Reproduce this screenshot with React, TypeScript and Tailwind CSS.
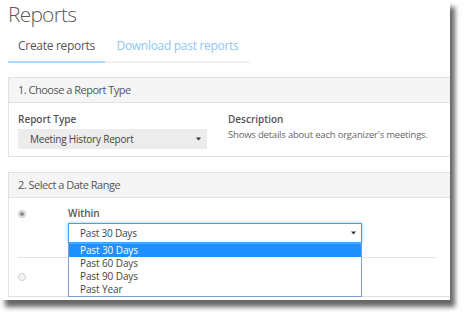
import React from "react";

const Caret = () => (
  <svg width="5" height="4" viewBox="0 0 5 4" className="shrink-0">
    <path d="M0 0.5 L5 0.5 L2.5 3.5 Z" fill="#333" />
  </svg>
);

const Radio = ({ checked }: { checked?: boolean }) => (
  <div
    className={
      checked
        ? "w-[8px] h-[8px] rounded-full border border-[#c4c4c4] bg-[#ececec] flex items-center justify-center"
        : "w-[8px] h-[8px] rounded-full border border-[#cfcfcf] bg-[#f3f3f3]"
    }
  >
    {checked && <div className="w-[4px] h-[4px] rounded-full bg-[#8a8a8a]" />}
  </div>
);

const SectionHeader = ({ children }: { children: React.ReactNode }) => (
  <div className="h-[25px] bg-[#f5f5f5] border-b border-[#e1e1e1] pl-[9px] flex items-center text-[11px] tracking-[-0.5px] text-[#555]">
    {children}
  </div>
);

const ranges = ["Past 30 Days", "Past 60 Days", "Past 90 Days", "Past Year"];

export default function App() {
  return (
    <div className="w-[465px] h-[319px] bg-white font-['Open_Sans',sans-serif] text-[#555]">
      <div className="w-[450px] h-[300px] bg-white overflow-hidden pl-[8px] shadow-[5px_7px_5px_rgba(0,0,0,0.6)]">
        <h1 className="pt-[1px] text-[21px] leading-[26px] font-light tracking-[-0.8px] text-[#5a5a5a]">
          Reports
        </h1>

        {/* tabs */}
        <div className="mt-[4px] flex w-[242px] text-[12px] tracking-[-0.3px]">
          <div className="w-[97px] h-[32px] border-b-2 border-[#addaf8] flex items-center justify-center text-[#555]">
            Create reports
          </div>
          <div className="flex-1 h-[32px] border-b-2 border-[#f1f1f1] flex items-center justify-center text-[#8ec6ef]">
            Download past reports
          </div>
        </div>

        {/* section 1 */}
        <div className="mt-[14px] border-t border-l border-b border-[#e1e1e1]">
          <SectionHeader>1. Choose a Report Type</SectionHeader>
          <div className="pl-[9px] pt-[10px] pb-[7px] flex gap-[21px]">
            <div className="w-[189px]">
              <div className="text-[10px] leading-[12px] font-semibold text-[#555]">Report Type</div>
              <div className="mt-[4px] h-[20px] bg-[#ececec] pl-[12px] pr-[6px] flex items-center justify-between text-[10px] tracking-[-0.2px] text-[#444]">
                <span>Meeting History Report</span>
                <Caret />
              </div>
            </div>
            <div>
              <div className="text-[10px] leading-[12px] font-semibold text-[#555]">Description</div>
              <div className="mt-[3px] text-[9.5px] leading-[14px] tracking-[-0.2px] text-[#666]">
                Shows details about each organizer's meetings.
              </div>
            </div>
          </div>
        </div>

        {/* section 2 */}
        <div className="mt-[15px] border-t border-l border-b border-[#e1e1e1]">
          <SectionHeader>2. Select a Date Range</SectionHeader>
          <div className="pl-[9px]">
            <div className="flex pt-[9px] pb-[14px] border-b border-[#e4e4e4] w-[419px]">
              <div className="w-[50px] pt-[3px]">
                <Radio checked />
              </div>
              <div>
                <div className="text-[10px] leading-[12px] font-semibold text-[#555]">Within</div>
                <div className="relative mt-[4px] w-[294px]">
                  <div className="h-[20px] bg-white border border-[#4a9fe6] shadow-[0_0_3px_#8cc3f0] pl-[11px] pr-[5px] flex items-center justify-between text-[10px] tracking-[-0.2px] text-[#444]">
                    <span>Past 30 Days</span>
                    <Caret />
                  </div>
                  <div className="absolute left-0 top-full w-[294px] bg-white border border-[#7f9fd2] z-10">
                    {ranges.map((r, i) => (
                      <div
                        key={r}
                        className={
                          i === 0
                            ? "h-[13px] leading-[13px] pl-[11px] text-[10px] tracking-[-0.1px] bg-[#1e90ff] text-white"
                            : "h-[13px] leading-[13px] pl-[11px] text-[10px] tracking-[-0.1px] text-[#444]"
                        }
                      >
                        {r}
                      </div>
                    ))}
                  </div>
                </div>
              </div>
            </div>
            <div className="h-[38px] flex items-center">
              <Radio />
            </div>
          </div>
        </div>
      </div>
    </div>
  );
}
